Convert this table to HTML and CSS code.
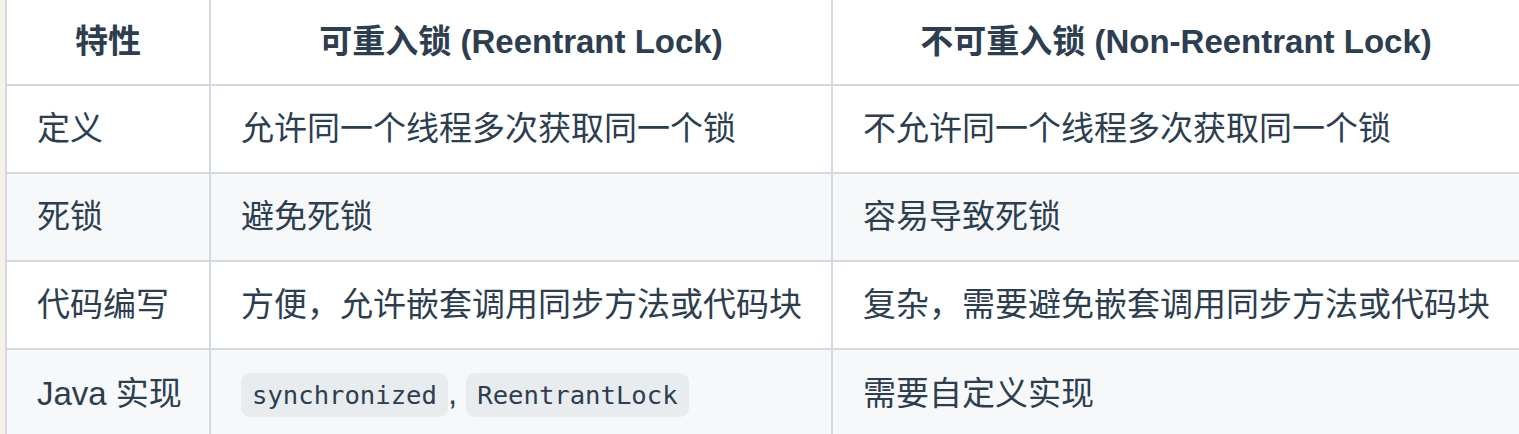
FILE: index.html
```html
<!DOCTYPE html>
<html lang="zh-CN">
<head>
<meta charset="utf-8">
<title>可重入锁 vs 不可重入锁</title>
<link rel="stylesheet" href="styles.css">
</head>
<body>
<div class="page">
  <table class="cmp">
    <colgroup>
      <col class="c1">
      <col class="c2">
      <col class="c3">
    </colgroup>
    <thead>
      <tr>
        <th>特性</th>
        <th>可重入锁 (Reentrant Lock)</th>
        <th>不可重入锁 (Non-Reentrant Lock)</th>
      </tr>
    </thead>
    <tbody>
      <tr>
        <td>定义</td>
        <td>允许同一个线程多次获取同一个锁</td>
        <td>不允许同一个线程多次获取同一个锁</td>
      </tr>
      <tr>
        <td>死锁</td>
        <td>避免死锁</td>
        <td>容易导致死锁</td>
      </tr>
      <tr>
        <td>代码编写</td>
        <td>方便，允许嵌套调用同步方法或代码块</td>
        <td>复杂，需要避免嵌套调用同步方法或代码块</td>
      </tr>
      <tr>
        <td>Java 实现</td>
        <td><code>synchronized</code>, <code>ReentrantLock</code></td>
        <td>需要自定义实现</td>
      </tr>
    </tbody>
  </table>
</div>
</body>
</html>
```

FILE: styles.css
```css
html, body {
  margin: 0;
  padding: 0;
  background: #f6f1ea;
  overflow: hidden;
}

.page {
  padding-left: 5px;
  background: #f6f1ea;
}

.cmp {
  border-collapse: separate;
  border-spacing: 0;
  table-layout: fixed;
  width: 1514px;
  background: #ffffff;
  font-family: "Liberation Sans", "Noto Sans CJK SC", sans-serif;
  font-size: 33px;
  color: #2c3e50;
}

.c1 { width: 206px; }
.c2 { width: 622px; }
.c3 { width: 686px; }

.cmp th,
.cmp td {
  border-right: 2px solid #d3d9e1;
  border-bottom: 2px solid #d3d9e1;
  padding: 13px 30px;
  line-height: 60px;
  white-space: nowrap;
  overflow: hidden;
}

.cmp th:first-child,
.cmp td:first-child {
  border-left: 2px solid #d3d9e1;
}

.cmp th:last-child,
.cmp td:last-child {
  border-right: 0;
}

.cmp th {
  padding-top: 12px;
  padding-bottom: 12px;
  font-weight: 700;
  text-align: center;
}

.cmp td {
  text-align: left;
  font-weight: 400;
}

.cmp tbody tr:nth-child(2n) {
  background: #f6f8fa;
}

.cmp code {
  font-family: "DejaVu Sans Mono", "Liberation Mono", monospace;
  font-size: 25.6px;
  background: #e9ecef;
  border-radius: 9px;
  padding: 7px 11px;
  color: #2c3e50;
}
```
